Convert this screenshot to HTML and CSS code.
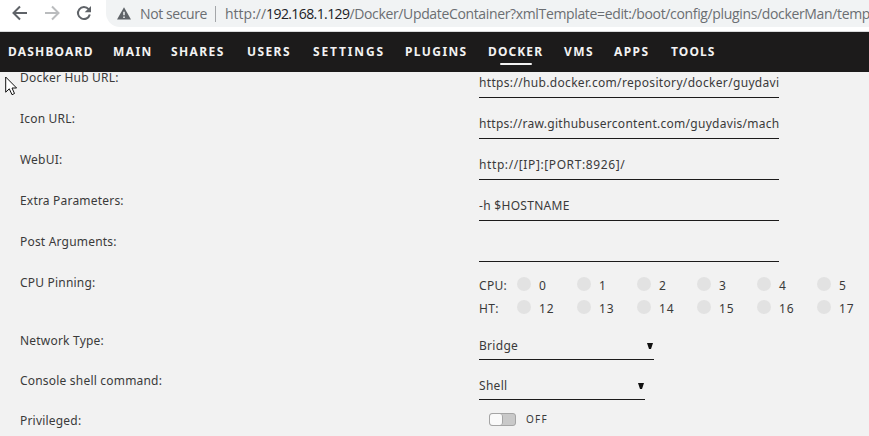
FILE: index.html
```
<!DOCTYPE html>
<html lang="en">
<head>
<meta charset="utf-8">
<title>Update Container</title>
<link rel="stylesheet" href="styles.css">
</head>
<body>
<div class="toolbar">
  <svg class="controls" width="106" height="31" viewBox="0 0 106 31" fill="none" stroke-width="2">
    <path stroke="#5f6368" d="M27 13H14M20 6.5L13.5 13L20 19.500"/>
    <path stroke="#babcbe" d="M45 13H58M52 6.500L58.500 13L52 19.500"/>
    <path stroke="#5f6368" d="M88.600 9.200A6 6 0 1 0 89.800 14.500"/>
    <path fill="#5f6368" d="M91 6V12.300H84.700Z"/>
  </svg>
  <div class="address">
    <svg class="warn" width="14" height="13" viewBox="0 0 14 13"><path fill="#5f6368" d="M7 .3L14 12.500H0Z"/><path stroke="#f1f3f4" stroke-width="1.500" d="M7 4.700V8.300M7 9.500V11"/></svg>
    <span class="secure">Not secure</span><span class="divider"></span>
    <span class="url">http://<b>192.168.1.129</b><span class="path">/Docker/UpdateContainer?xmlTemplate=edit:/boot/config/plugins/dockerMan/temp</span></span>
  </div>
</div>
<nav class="menu">
  <a class="dashboard">DASHBOARD</a><a class="main">MAIN</a><a class="shares">SHARES</a><a class="users">USERS</a><a class="settings">SETTINGS</a><a class="plugins">PLUGINS</a><a class="docker">DOCKER</a><a class="vms">VMS</a><a class="apps">APPS</a><a class="tools">TOOLS</a>
</nav>
<main class="form">
  <div class="row"><label>Docker Hub URL:</label><div class="field hub">https://hub.docker.com/repository/docker/guydavi</div></div>
  <div class="row"><label>Icon URL:</label><div class="field raw">https://raw.githubusercontent.com/guydavis/mach</div></div>
  <div class="row"><label>WebUI:</label><div class="field web">http://[IP]:[PORT:8926]/</div></div>
  <div class="row"><label>Extra Parameters:</label><div class="field host">-h $HOSTNAME</div></div>
  <div class="row"><label>Post Arguments:</label><div class="field"></div></div>
  <div class="row cpu"><label>CPU Pinning:</label>
    <div class="pins">
      <div class="line"><span class="name">CPU:</span><span class="pin"><i></i>0</span><span class="pin"><i></i>1</span><span class="pin"><i></i>2</span><span class="pin"><i></i>3</span><span class="pin"><i></i>4</span><span class="pin"><i></i>5</span></div>
      <div class="line"><span class="name">HT:</span><span class="pin"><i></i>12</span><span class="pin"><i></i>13</span><span class="pin"><i></i>14</span><span class="pin"><i></i>15</span><span class="pin"><i></i>16</span><span class="pin"><i></i>17</span></div>
    </div>
  </div>
  <div class="row short"><label>Network Type:</label><div class="field select bridge">Bridge<svg width="6" height="7" viewBox="0 0 6 7"><path fill="#111" d="M0 0H6L4 6H2Z"/></svg></div></div>
  <div class="row short"><label>Console shell command:</label><div class="field select shell">Shell<svg width="6" height="7" viewBox="0 0 6 7"><path fill="#111" d="M0 0H6L4 6H2Z"/></svg></div></div>
  <div class="row short"><label>Privileged:</label><div class="toggle"><span class="switch"><i></i></span><span class="off">OFF</span></div></div>
</main>
<svg class="cursor" width="13" height="21" viewBox="0 0 13 21"><path fill="#fff" stroke="#111" d="M.7 1V16.200L4.300 12.800L7 18.700L9.500 17.500L7 12H11.600Z"/></svg>
</body>
</html>
```
FILE: styles.css
```
* { box-sizing: border-box; }
body { margin: 0; width: 869px; height: 436px; overflow: hidden; background: #f2f2f2; color: #3a3a3a; font: 12px/16px "Noto Sans", sans-serif; letter-spacing: .3px; }
.toolbar { display: flex; height: 32px; background: #fff; border-bottom: 1px solid #d8d9db; }
.controls { flex: none; }
.address { flex: 1; min-width: 0; display: flex; align-items: center; height: 27px; padding-left: 11px; background: #f1f3f4; border-radius: 0 0 0 14px; white-space: nowrap; overflow: hidden; font: 14px/20px "Open Sans", sans-serif; letter-spacing: 0; color: #6b6e72; }
.warn { flex: none; margin-right: 9px; }
.secure { flex: none; width: 75px; letter-spacing: -.4px; }
.divider { flex: none; width: 1px; height: 16px; margin-right: 9px; background: #a4a6a9; }
.url b { font-weight: 400; color: #202124; letter-spacing: -.6px; }
.path { letter-spacing: -.35px; }
.menu { position: relative; z-index: 1; display: flex; height: 40px; padding-left: 8px; background: #1c1b1b; color: #f2f2f2; font: 700 12px/40px "Noto Sans", sans-serif; letter-spacing: 1.4px; }
.menu a { flex: none; }
.dashboard { width: 105px; letter-spacing: 1.2px; }
.main { width: 58px; }
.shares { width: 76px; }
.users { width: 66px; }
.menu .settings { width: 92px; letter-spacing: 1.85px; }
.plugins { width: 83px; }
.docker { width: 76px; position: relative; letter-spacing: 1.1px; }
.docker::after { content: ""; position: absolute; left: 12px; top: 31px; width: 32px; height: 2px; border-radius: 1px; background: #f2f2f2; }
.vms { width: 50px; }
.apps { width: 57px; }
.tools { letter-spacing: 1.1px; }
.form { margin-top: -15px; }
.row { display: grid; grid-template-columns: 459px 1fr; height: 41px; padding-left: 20px; }
.row label { padding-top: 13px; letter-spacing: .2px; }
.field { width: 300px; border-bottom: 1px solid #1c1b1b; padding-top: 18px; white-space: nowrap; overflow: hidden; }
.hub { letter-spacing: .33px; }
.raw { letter-spacing: .28px; }
.web { letter-spacing: .6px; }
.short { height: 40px; }
.cpu { height: 58px; }
.pins { padding-top: 11px; }
.line { display: flex; height: 23px; align-items: center; }
.name { width: 38px; padding-top: 2px; }
.pin { display: flex; width: 60px; height: 18px; line-height: 20px; letter-spacing: .8px; }
.pin i { width: 14px; height: 14px; margin: 1px 8px 0 0; border-radius: 50%; background: #e2e2e2; }
.select { display: flex; justify-content: space-between; }
.select svg { margin: 5px 1px 0 0; }
.bridge { width: 175px; }
.shell { width: 166px; }
.toggle { display: flex; padding: 13px 0 0 10px; }
.switch { width: 27px; height: 13px; border: 1px solid #a5a5a5; border-radius: 3px; background: #c9c9c9; }
.switch i { display: block; width: 13px; height: 11px; border-radius: 3px; background: #fafafa; border-right: 1px solid #a5a5a5; }
.off { margin-left: 10px; font-size: 10px; line-height: 13px; letter-spacing: 1.2px; }
.cursor { position: absolute; z-index: 2; left: 5px; top: 76px; }
```
